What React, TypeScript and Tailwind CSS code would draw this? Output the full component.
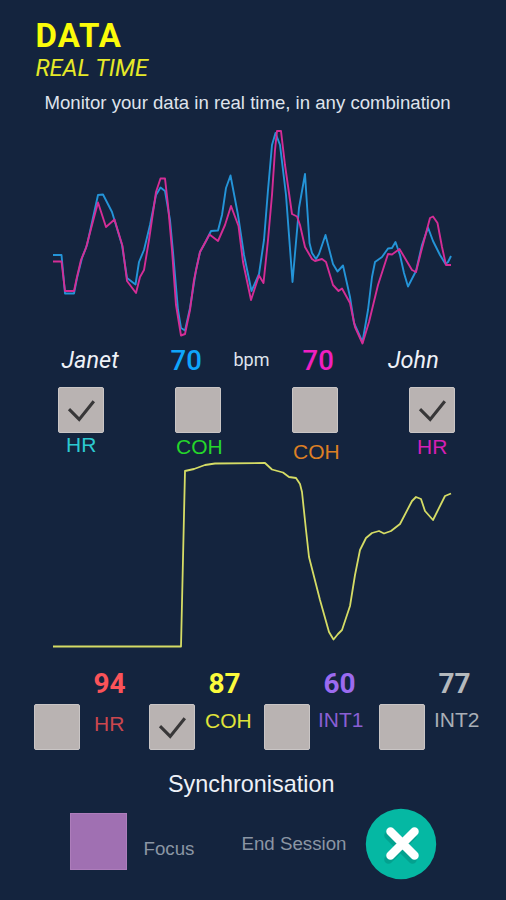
import { useState } from 'react'

const JANET_HR = '53,255 61.5,255 65,293.5 74,293.5 77,278 82,258 87,245 98,195 103,194.5 112,212 122,245 127,278 135.5,284.5 139,262 144,250 150,225 156,195 160.5,187.5 165,191 170,220 173,252 178,310 181,328 185,330.5 190,308 196,270 200,252 206,241 211,231 218,230.5 222,215 226,188 230.5,175.5 238,215 244,255 251.5,291 259,274 264,240 268,190 272,145 275.5,133 280,145 286,195 292.5,282 299,208 305,174 307,205 309.5,243 312,253 316,259 319,254 325.5,235 333,264 337.5,271.5 343,265.5 350,297 354,323 362.5,342 368,310 372,277 375,262 382,257 388,248.5 392,248 395.5,242 400,255 404,273 408,286.5 416,271 422,245 428,227.5 433,241 440,255 445.5,264 448,262 451,256'
const JOHN_HR = '53,261.5 61.5,261.5 65,291 74,291 77,277 81,260 86,248 92,225 98,202.5 106,227 114.5,219.5 122.5,246 127,281 136,293 140,277 144,270 149,240 156,192 160.5,178.5 165,178.5 168,205 172,250 176,305 181,335.5 185,334 190,310 194,280 200,252 209.5,234.5 218,241 225,225 231,206 238.5,226 243,262 251,300 259,275.5 263.5,283 268,240 272,195 275,150 277,131 281,131 285,165 292,214 297,216.5 300,225 305,247 312,259 315,261 322,259 326,262 333,285 338.5,291 342,288.5 350,303 355,327 362.5,343.5 369,322 378,285 388,254 392,254.5 399.5,249 412,270 416,272 421,252 430,218 433,216.5 437.5,223 442,247 446,265 451,265'
const SYNC_COH = '53,646.5 181,646.5 185,471 194,469 205,465 215,463.5 265,463 272,469.5 283,472.5 289,477 296,478 300,484 302,492 306,530 309,557 320,600 329,632 333.5,639.5 338,634 342,630 350,606 355,575 360,550 366,538 372,533 379,531 384,533.5 391,531 400,524 412,501 416,497 421,499 425,511 433,520 445,496 451,493.5'

const PEOPLE = [
  { id: 'janet-hr', label: 'HR', color: 'text-[#2cc9d0]', pad: 'pt-0 pl-[8px]' },
  { id: 'janet-coh', label: 'COH', color: 'text-[#25d62b]', pad: 'pt-[2px] pl-[1px]' },
  { id: 'john-coh', label: 'COH', color: 'text-[#dc7f24]', pad: 'pt-[7px] pl-[1px]' },
  { id: 'john-hr', label: 'HR', color: 'text-[#d51fb5]', pad: 'pt-[2px] pl-[8px]' },
]

const SYNC = [
  { id: 'hr', value: 94, label: 'HR', num: 'text-[#fb5359]', color: 'text-[#cb474e]', pad: 'pt-[8px] pl-[14px]' },
  { id: 'coh', value: 87, label: 'COH', num: 'text-[#fcfb3c]', color: 'text-[#e0e33a]', pad: 'pt-[5px] pl-[10px]' },
  { id: 'int1', value: 60, label: 'INT1', num: 'text-[#9b6bf0]', color: 'text-[#8a5fd3]', pad: 'pt-[4px] pl-[8px]' },
  { id: 'int2', value: 77, label: 'INT2', num: 'text-[#b4b9bd]', color: 'text-[#a9afb6]', pad: 'pt-[4px] pl-[9px]' },
]

const SANS = "font-['Liberation_Sans',sans-serif]"

function CheckBox({ checked, onToggle }: { checked: boolean; onToggle: () => void }) {
  return (
    <button
      role="checkbox"
      aria-checked={checked}
      onClick={onToggle}
      className="block w-[46px] h-[46px] shrink-0 rounded-[2px] border border-[#c9c5c5] bg-[#b9b3b2]"
    >
      {checked && (
        <svg viewBox="0 0 44 44" className="w-[44px] h-[44px]" fill="none" stroke="#383738" strokeWidth="3.1">
          <path d="M10 21.2 L20.2 31.4 L34.8 13.3" />
        </svg>
      )}
    </button>
  )
}

export default function App() {
  const [on, setOn] = useState<string[]>(['janet-hr', 'john-hr', 'coh'])

  function toggle(id: string) {
    setOn(on.includes(id) ? on.filter(x => x !== id) : [...on, id])
  }

  return (
    <div className="flex flex-col w-[506px] h-[900px] overflow-hidden bg-[#14243e] font-[Roboto,sans-serif] whitespace-nowrap">

      {/* Header */}
      <header className="pt-[18px] pl-[35px]">
        <h1 className="h-[34px] pl-[0.5px] text-[33px] leading-[35px] font-bold tracking-[1.1px] text-[#fbfb0a]">DATA</h1>
        <h2 className="h-8 pl-[0.5px] text-[23.6px] leading-8 italic text-[#e6e928]">REAL TIME</h2>
      </header>
      <p className={`h-[38px] pl-[44.5px] text-[18.6px] leading-[38px] text-[#dfe3ec] ${SANS}`}>
        Monitor your data in real time, in any combination
      </p>

      {/* Heart rate chart */}
      <svg viewBox="0 122 506 224" className="w-[506px] h-[224px] shrink-0" fill="none" strokeWidth="1.9" strokeLinejoin="round">
        <polyline points={JANET_HR} stroke="#2494d8" />
        <polyline points={JOHN_HR} stroke="#d42d96" />
      </svg>

      {/* Live values */}
      <div className="flex h-[28px] pl-[61.5px] leading-[28px] text-[#eef1f7]">
        <span className="w-[109px] text-[23.5px] italic">Janet</span>
        <span className="w-[63px] pt-px text-[27.5px] font-medium text-[#0fa5fb]">70</span>
        <span className="w-[69px] text-[18px] text-[#dfe3ec]">bpm</span>
        <span className="w-[85.5px] pt-px text-[27.5px] font-medium text-[#f01fc0]">70</span>
        <span className="text-[23.5px] italic">John</span>
      </div>

      <div className="flex gap-[71px] h-[86px] pt-[13px] pl-[58px]">
        {PEOPLE.map(({ id, label, color, pad }) => (
          <div key={id} className="w-[46px]">
            <CheckBox checked={on.includes(id)} onToggle={() => toggle(id)} />
            <div className={`text-[21px] leading-6 ${SANS} ${color} ${pad}`}>{label}</div>
          </div>
        ))}
      </div>

      {/* Coherence chart */}
      <svg viewBox="0 460 506 208" className="w-[506px] h-[208px] shrink-0" fill="none" strokeWidth="1.8" strokeLinejoin="round">
        <polyline points={SYNC_COH} stroke="#d5dc65" />
      </svg>

      <div className="flex h-[82px] pl-[34px]">
        {SYNC.map(({ id, value, label, num, color, pad }) => (
          <div key={id} className="w-[115px] shrink-0">
            <div className={`h-[36px] pl-[59.5px] text-[28px] leading-[31px] font-bold ${num}`}>{value}</div>
            <div className="flex">
              <CheckBox checked={on.includes(id)} onToggle={() => toggle(id)} />
              <span className={`text-[21px] leading-6 ${SANS} ${color} ${pad}`}>{label}</span>
            </div>
          </div>
        ))}
      </div>

      {/* Synchronisation */}
      <h3 className={`h-[58px] pt-[20px] pl-[168px] text-[23.4px] leading-[28px] text-[#eef1f7] ${SANS}`}>Synchronisation</h3>
      <footer className={`flex pl-[70px] text-[18.7px] leading-5 text-[#8b96a4] ${SANS}`}>
        <button className="mt-[5px] w-[57px] h-[57px] bg-[#a070b2] border border-[#ad7dbb]" aria-label="Focus" />
        <span className="w-[98px] pt-[31px] pl-[16.5px]">Focus</span>
        <span className="w-[140px] pt-[26px] pl-[16.5px]">End Session</span>
        <button aria-label="End session">
          <svg viewBox="0 0 72 72" className="w-[72px] h-[72px]">
            <circle cx="36" cy="36" r="35.2" fill="#05b8a3" />
            <path d="M25 25 L49 49 M49 25 L25 49" transform="translate(-1.5 2.5)" stroke="#03a18f" strokeWidth="8.5" strokeLinecap="round" />
            <path d="M25.5 23.5 L49.5 47.5 M49.5 23.5 L25.5 47.5" stroke="#ffffff" strokeWidth="8.5" strokeLinecap="round" />
          </svg>
        </button>
      </footer>
    </div>
  )
}
